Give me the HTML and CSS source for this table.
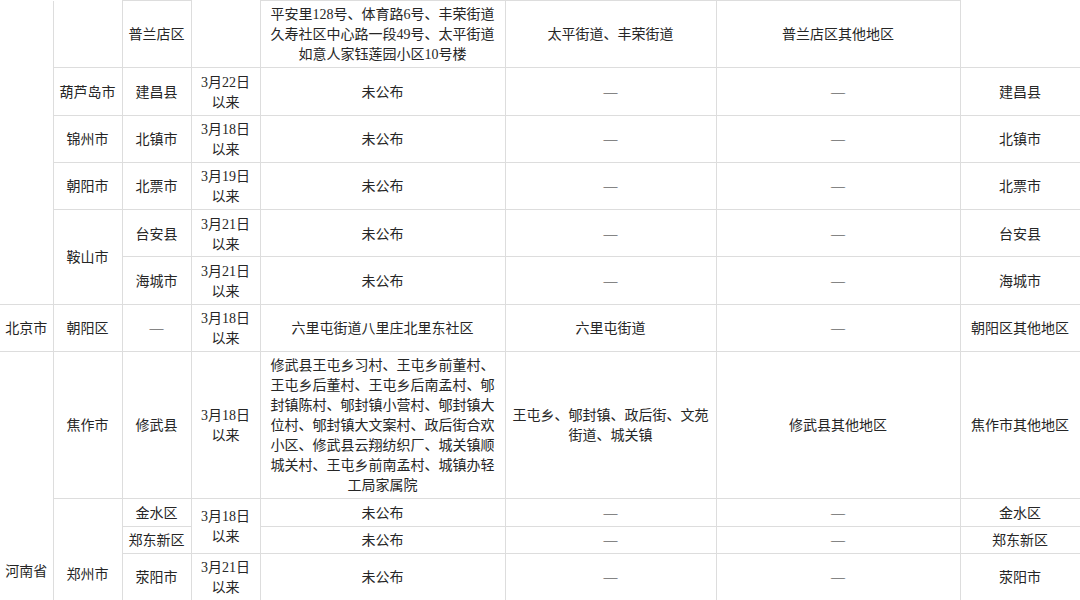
FILE: index.html
```html
<!DOCTYPE html>
<html lang="zh-CN">
<head>
<meta charset="utf-8">
<title>风险地区表</title>
<link rel="stylesheet" href="styles.css">
</head>
<body>
<table class="risk">
  <colgroup>
    <col class="c-prov"><col class="c-city"><col class="c-dist"><col class="c-date">
    <col class="c-high"><col class="c-mid"><col class="c-low"><col class="c-other">
  </colgroup>
  <tbody>
    <tr class="r3">
      <td rowspan="6" class="prov"></td>
      <td></td>
      <td class="top">普兰店区</td>
      <td></td>
      <td class="top">平安里128号、体育路6号、丰荣街道久寿社区中心路一段49号、太平街道如意人家钰莲园小区10号楼</td>
      <td class="top">太平街道、丰荣街道</td>
      <td class="top">普兰店区其他地区</td>
      <td class="last"></td>
    </tr>
    <tr>
      <td>葫芦岛市</td><td>建昌县</td><td>3月22日<br>以来</td><td>未公布</td><td>—</td><td>—</td><td class="last">建昌县</td>
    </tr>
    <tr>
      <td>锦州市</td><td>北镇市</td><td>3月18日<br>以来</td><td>未公布</td><td>—</td><td>—</td><td class="last">北镇市</td>
    </tr>
    <tr>
      <td>朝阳市</td><td>北票市</td><td>3月19日<br>以来</td><td>未公布</td><td>—</td><td>—</td><td class="last">北票市</td>
    </tr>
    <tr>
      <td rowspan="2">鞍山市</td><td>台安县</td><td>3月21日<br>以来</td><td>未公布</td><td>—</td><td>—</td><td class="last">台安县</td>
    </tr>
    <tr>
      <td>海城市</td><td>3月21日<br>以来</td><td>未公布</td><td>—</td><td>—</td><td class="last">海城市</td>
    </tr>
    <tr>
      <td class="prov">北京市</td><td>朝阳区</td><td>—</td><td>3月18日<br>以来</td><td>六里屯街道八里庄北里东社区</td><td>六里屯街道</td><td>—</td><td class="last">朝阳区其他地区</td>
    </tr>
    <tr>
      <td rowspan="8" class="prov">河南省</td>
      <td>焦作市</td><td>修武县</td><td>3月18日<br>以来</td>
      <td>修武县王屯乡习村、王屯乡前董村、王屯乡后董村、王屯乡后南孟村、郇封镇陈村、郇封镇小营村、郇封镇大位村、郇封镇大文案村、政后街合欢小区、修武县云翔纺织厂、城关镇顺城关村、王屯乡前南孟村、城镇办轻工局家属院</td>
      <td>王屯乡、郇封镇、政后街、文苑街道、城关镇</td>
      <td>修武县其他地区</td>
      <td class="last">焦作市其他地区</td>
    </tr>
    <tr>
      <td rowspan="4">郑州市</td><td>金水区</td><td rowspan="2">3月18日<br>以来</td><td>未公布</td><td>—</td><td>—</td><td class="last">金水区</td>
    </tr>
    <tr>
      <td>郑东新区</td><td>未公布</td><td>—</td><td>—</td><td class="last">郑东新区</td>
    </tr>
    <tr>
      <td>荥阳市</td><td>3月21日<br>以来</td><td>未公布</td><td>—</td><td>—</td><td class="last">荥阳市</td>
    </tr>
    <tr>
      <td>中牟县</td><td>3月21日<br>以来</td><td>未公布</td><td>—</td><td>—</td><td class="last">中牟县</td>
    </tr>
    <tr>
      <td>许昌市</td><td>禹州市</td><td>3月21日<br>以来</td><td>未公布</td><td>—</td><td>—</td><td class="last">禹州市</td>
    </tr>
    <tr>
      <td>周口市</td><td>郸城县</td><td>3月20日<br>以来</td><td>未公布</td><td>—</td><td>—</td><td class="last">郸城县</td>
    </tr>
    <tr>
      <td>商丘市</td><td>夏邑县</td><td>3月20日<br>以来</td><td>未公布</td><td>—</td><td>—</td><td class="last">夏邑县</td>
    </tr>
  </tbody>
</table>
</body>
</html>
```

FILE: styles.css
```css
html, body {
  margin: 0;
  padding: 0;
  background: #ffffff;
  overflow: hidden;
}

.risk {
  width: 1080px;
  table-layout: fixed;
  border-collapse: collapse;
  font-family: "Liberation Serif", "Noto Sans CJK SC", serif;
  font-size: 14px;
  line-height: 20px;
  color: #262626;
}

.c-prov { width: 53px; }
.c-city { width: 69px; }
.c-dist { width: 69px; }
.c-date { width: 69px; }
.c-high { width: 245px; }
.c-mid { width: 211px; }
.c-low { width: 244px; }
.c-other { width: 120px; }

.risk td {
  border: 1px solid #dddddd;
  padding: 4.4px 5px 1.9px;
  text-align: center;
  vertical-align: middle;
  word-break: break-all;
}

.risk tr:first-child td {
  border-top: none;
}

.risk tr:first-child td.top {
  border-top: 1px solid #dddddd;
}

.risk td.prov {
  border-left: none;
  padding-left: 4px;
  padding-right: 4px;
}

.risk td.last {
  border-right: 1px solid #b9c0cc;
}
```
